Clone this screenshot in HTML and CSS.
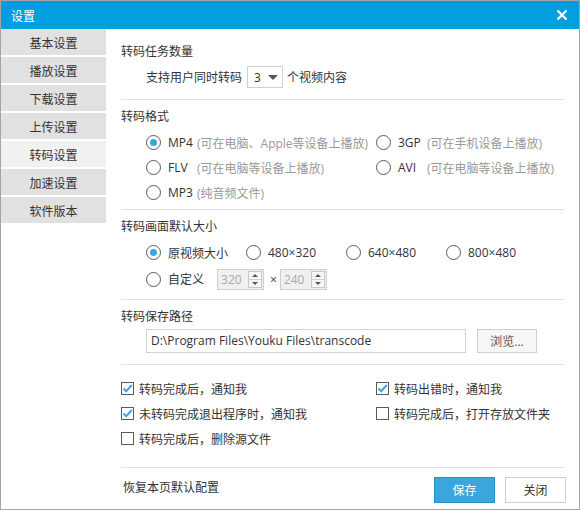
FILE: index.html
```html
<!DOCTYPE html>
<html lang="zh-CN">
<head>
<meta charset="utf-8">
<title>设置</title>
<link rel="stylesheet" href="styles.css">
</head>
<body>
<div class="win">
  <div class="titlebar">
    <span class="title">设置</span>
    <svg class="close" width="12" height="12" viewBox="0 0 12 12"><path d="M1.5 1.5 L10.5 10.5 M10.5 1.5 L1.5 10.5" stroke="#fff" stroke-width="2.2" fill="none"/></svg>
  </div>
  <div class="main">
    <nav class="side">
      <div class="nav-item">基本设置</div>
      <div class="nav-item">播放设置</div>
      <div class="nav-item">下载设置</div>
      <div class="nav-item">上传设置</div>
      <div class="nav-item active">转码设置</div>
      <div class="nav-item">加速设置</div>
      <div class="nav-item">软件版本</div>
    </nav>
    <div class="content">
      <section class="sec sec1">
        <div class="h">转码任务数量</div>
        <div class="row indent r-count">
          <span>支持用户同时转码</span>
          <span class="select"><span class="sel-val">3</span><i class="caret"></i></span>
          <span>个视频内容</span>
        </div>
      </section>
      <div class="divider"></div>
      <section class="sec sec2">
        <div class="h">转码格式</div>
        <div class="fmt-grid indent">
          <label class="radio-item"><span class="radio on"></span><span class="nm">MP4</span><span class="note">(可在电脑、Apple等设备上播放)</span></label>
          <label class="radio-item"><span class="radio"></span><span class="nm">3GP</span><span class="note">(可在手机设备上播放)</span></label>
          <label class="radio-item"><span class="radio"></span><span class="nm">FLV</span><span class="note">(可在电脑等设备上播放)</span></label>
          <label class="radio-item"><span class="radio"></span><span class="nm">AVI</span><span class="note">(可在电脑等设备上播放)</span></label>
          <label class="radio-item"><span class="radio"></span><span class="nm">MP3</span><span class="note">(纯音频文件)</span></label>
        </div>
      </section>
      <div class="divider"></div>
      <section class="sec sec3">
        <div class="h">转码画面默认大小</div>
        <div class="size-row indent">
          <label class="radio-item size-item"><span class="radio on"></span><span>原视频大小</span></label>
          <label class="radio-item size-item"><span class="radio"></span><span>480×320</span></label>
          <label class="radio-item size-item"><span class="radio"></span><span>640×480</span></label>
          <label class="radio-item size-item"><span class="radio"></span><span>800×480</span></label>
        </div>
        <div class="custom-row indent">
          <label class="radio-item"><span class="radio"></span><span>自定义</span></label>
          <span class="spin spin-first"><span class="spin-val">320</span><span class="spin-btns"><i class="up"></i><i class="down"></i></span></span>
          <span class="times">×</span>
          <span class="spin"><span class="spin-val">240</span><span class="spin-btns"><i class="up"></i><i class="down"></i></span></span>
        </div>
      </section>
      <div class="divider"></div>
      <section class="sec sec4">
        <div class="h">转码保存路径</div>
        <div class="path-row indent">
          <span class="path-input">D:\Program Files\Youku Files\transcode</span>
          <span class="browse">浏览...</span>
        </div>
      </section>
      <div class="divider"></div>
      <section class="sec sec5">
        <div class="chk-grid">
          <label class="chk-item"><span class="chk on"><svg width="13" height="13" viewBox="0 0 13 13"><path d="M2.5 6.5 L5.2 9.2 L10.8 3" stroke="#38a7e0" stroke-width="2" fill="none"/></svg></span><span>转码完成后，通知我</span></label>
          <label class="chk-item"><span class="chk on"><svg width="13" height="13" viewBox="0 0 13 13"><path d="M2.5 6.5 L5.2 9.2 L10.8 3" stroke="#38a7e0" stroke-width="2" fill="none"/></svg></span><span>转码出错时，通知我</span></label>
          <label class="chk-item"><span class="chk on"><svg width="13" height="13" viewBox="0 0 13 13"><path d="M2.5 6.5 L5.2 9.2 L10.8 3" stroke="#38a7e0" stroke-width="2" fill="none"/></svg></span><span>未转码完成退出程序时，通知我</span></label>
          <label class="chk-item"><span class="chk"></span><span>转码完成后，打开存放文件夹</span></label>
          <label class="chk-item"><span class="chk"></span><span>转码完成后，删除源文件</span></label>
        </div>
      </section>
      <div class="divider"></div>
      <div class="footer">
        <span class="restore">恢复本页默认配置</span>
        <span class="btns">
          <span class="btn primary">保存</span>
          <span class="btn">关闭</span>
        </span>
      </div>
    </div>
  </div>
</div>
</body>
</html>
```
FILE: styles.css
```css
* { box-sizing: border-box; }
html, body { margin: 0; padding: 0; }
body {
  width: 580px;
  height: 510px;
  overflow: hidden;
  font-family: "Open Sans", "Noto Sans CJK SC", sans-serif;
  font-size: 12px;
  color: #333;
  background: #fff;
}
.win {
  width: 580px;
  height: 510px;
  border: 1px solid #a4a4a4;
  display: flex;
  flex-direction: column;
}
.titlebar {
  height: 28px;
  background: #019fde;
  display: flex;
  align-items: center;
  justify-content: space-between;
  padding: 0 11px 0 10px;
  flex: none;
}
.title { color: #fff; font-size: 12px; font-family: "Noto Sans CJK SC", sans-serif; }
.close { display: block; }
.main { flex: 1; display: flex; }
.side {
  width: 105px;
  flex: none;
  background: #fff;
}
.nav-item {
  height: 26px;
  margin-bottom: 2px;
  background: #e1e1e1;
  display: flex;
  align-items: center;
  justify-content: center;
  font-family: "Noto Sans CJK SC", sans-serif;
  color: #333;
}
.nav-item.active { background: #f1f1f1; }
.content {
  flex: 1;
  padding: 0 15px;
  display: flex;
  flex-direction: column;
}
.divider { height: 1px; background: #e0e0e0; flex: none; }
.h { line-height: 20px; height: 20px; }
.indent { padding-left: 25px; }
.row { display: flex; align-items: center; }
.sec1 { padding: 13px 0 11px; }
.r-count { margin-top: 4px; height: 22px; }
.select {
  width: 36px;
  height: 22px;
  border: 1px solid #cfcfcf;
  margin: 0 4px 0 5px;
  display: flex;
  align-items: center;
  justify-content: space-between;
  padding: 0 4px 0 6px;
}
.caret {
  width: 0; height: 0;
  border-left: 5px solid transparent;
  border-right: 5px solid transparent;
  border-top: 5px solid #555;
}
.sec2 { padding: 7px 0 4px; }
.fmt-grid {
  margin-top: 3px;
  display: grid;
  grid-template-columns: 230px 1fr;
  grid-auto-rows: 25px;
}
.radio-item { display: flex; align-items: center; white-space: nowrap; }
.radio {
  width: 15px; height: 15px;
  border: 1px solid #5a5a5a;
  border-radius: 50%;
  margin-right: 7px;
  flex: none;
  display: flex;
  align-items: center;
  justify-content: center;
  background: #fff;
}
.radio.on::after {
  content: "";
  width: 7px; height: 7px;
  border-radius: 50%;
  background: #38a7e0;
}
.nm { min-width: 26px; margin-right: 3px; }
.note { color: #999; }
.sec3 { padding: 7px 0 6px; }
.size-row { margin-top: 3px; height: 25px; display: flex; }
.size-item { width: 100px; }
.custom-row { height: 28px; display: flex; align-items: center; }
.spin {
  width: 47px; height: 21px;
  border: 1px solid #cfcfcf;
  background: #f0f0f0;
  display: flex;
  align-items: center;
  justify-content: space-between;
  padding: 1px 1px 1px 3px;
}
.spin-first { margin-left: 13px; }
.spin-val { color: #aaa; }
.spin-btns {
  width: 14px; height: 17px;
  border: 1px solid #c8c8c8;
  background: #f6f6f6;
  display: flex;
  flex-direction: column;
}
.spin-btns i { flex: 1; display: flex; align-items: center; justify-content: center; }
.spin-btns i.up { border-bottom: 1px solid #d0d0d0; }
.spin-btns i.up::after {
  content: ""; width: 0; height: 0;
  border-left: 3px solid transparent; border-right: 3px solid transparent;
  border-bottom: 3px solid #555;
}
.spin-btns i.down::after {
  content: ""; width: 0; height: 0;
  border-left: 3px solid transparent; border-right: 3px solid transparent;
  border-top: 3px solid #555;
}
.times { margin: 0 3px 0 6px; color: #333; }
.sec4 { padding: 7px 0 11px; }
.path-row { margin-top: 2px; height: 24px; display: flex; }
.path-input {
  width: 320px; height: 24px;
  border: 1px solid #d3d3d3;
  padding: 0 4px;
  line-height: 22px;
  white-space: nowrap;
}
.browse {
  margin-left: 11px;
  width: 60px; height: 24px;
  border: 1px solid #cfcfcf;
  background: #f6f6f6;
  display: flex;
  align-items: center;
  justify-content: center;
  color: #555;
}
.sec5 { padding: 11px 0 16px; }
.chk-grid {
  display: grid;
  grid-template-columns: 255px 1fr;
  grid-auto-rows: 25px;
}
.chk-item { display: flex; align-items: center; white-space: nowrap; }
.chk {
  width: 13px; height: 13px;
  border: 1px solid #5a5a5a;
  background: #fff;
  margin-right: 5px;
  flex: none;
  position: relative;
}
.chk svg { position: absolute; left: -1px; top: -1px; }
.footer {
  padding-top: 9px;
  display: flex;
  justify-content: space-between;
  align-items: flex-start;
  margin-right: -2px;
}
.restore { padding-left: 2px; line-height: 22px; }
.btns { display: flex; gap: 10px; }
.btn {
  width: 61px; height: 26px;
  border: 1px solid #cfcfcf;
  background: #fff;
  display: flex;
  align-items: center;
  justify-content: center;
  color: #333;
}
.btn.primary { background: #3aa6de; border-color: #1f8fd0; color: #fff; }
```
